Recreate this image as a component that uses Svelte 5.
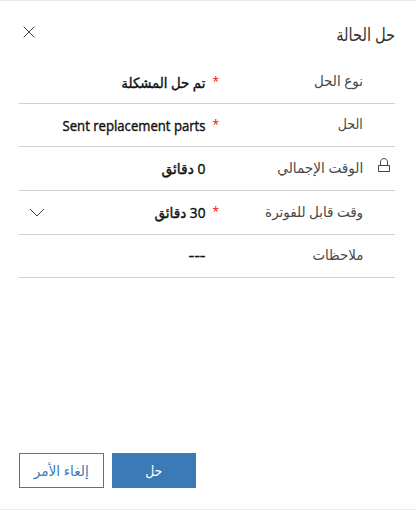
<script>
  const rows = [
    { label: 'نوع الحل', lw: 49, value: 'تم حل المشكلة', vw: 84, required: true, h: 43 },
    { label: 'الحل', lw: 25, value: 'Sent replacement parts', vw: 143, required: true, h: 43, latin: true },
    { label: 'الوقت الإجمالي', lw: 86, value: '0 دقائق', vw: 44, locked: true, h: 44 },
    { label: 'وقت قابل للفوترة', lw: 98, value: '30 دقائق', vw: 51, required: true, select: true, h: 44 },
    { label: 'ملاحظات', lw: 51, value: '---', vw: 17, h: 43, latin: true, empty: true }
  ];

  // Condenses a line of text to the width given for it.
  function fit(node, width) {
    node.style.transform = `scaleX(${width / node.getBoundingClientRect().width})`;
  }
</script>

<main class="dialog" dir="rtl">
  <header>
    <h1><span class="fit" use:fit={59}>حل الحالة</span></h1>
    <button class="close" aria-label="إغلاق">
      <svg width="12" height="12" viewBox="0 0 12 12"><path d="M.7.7 11.3 11.3M11.3.7.7 11.3" /></svg>
    </button>
  </header>

  <section>
    {#each rows as row}
      <div class="row" style:height="{row.h}px">
        <div class="lock">
          {#if row.locked}
            <svg width="12" height="15" viewBox="0 0 12 15"><path d="M.5 7.5h11v6H.5zM2.5 7.500V4C2.500 2 4 .6 6 .6S9.500 2 9.500 4v3.500" /></svg>
          {/if}
        </div>
        <div class="label"><span class="fit" use:fit={row.lw}>{row.label}</span></div>
        <div class="star">{row.required ? '*' : ''}</div>
        <div class="value" class:latin={row.latin} class:empty={row.empty}><span class="fit" use:fit={row.vw}>{row.value}</span></div>
        {#if row.select}
          <svg class="chevron" width="16" height="9" viewBox="0 0 16 9"><path d="M1 1l7 7 7-7" /></svg>
        {/if}
      </div>
    {/each}
  </section>

  <footer>
    <button class="primary"><span class="fit mid" use:fit={17}>حل</span></button>
    <button class="secondary"><span class="fit mid" use:fit={55}>إلغاء الأمر</span></button>
  </footer>
</main>

<style>
  .dialog {
    box-sizing: border-box;
    width: 416px;
    height: 510px;
    padding: 0 21px 0 19px;
    display: flex;
    flex-direction: column;
    background: #fff;
    border-top: 1px solid #ebebeb;
    border-bottom: 1px solid #ebebeb;
    font-family: 'Open Sans', 'DejaVu Sans', sans-serif;
    color: #484848;
  }
  header {
    height: 60px;
    display: flex;
    justify-content: space-between;
  }
  h1 {
    margin: 0;
    padding-top: 22px;
    font-size: 18px;
    line-height: 22px;
    font-weight: 400;
    color: #333;
  }
  .fit {
    display: inline-block;
    white-space: nowrap;
    transform-origin: right center;
  }
  .mid {
    transform-origin: center;
  }
  button {
    font: inherit;
    padding: 0;
    border: 0;
    background: none;
  }
  .close {
    width: 12px;
    height: 12px;
    margin: 25px 0 0 4px;
    line-height: 0;
  }
  svg {
    display: block;
    fill: none;
    stroke: #444;
    stroke-width: 1;
  }
  .row {
    box-sizing: border-box;
    display: flex;
    align-items: center;
    border-bottom: 1px solid #d2d2d2;
  }
  .lock {
    width: 32px;
    padding: 0 5px 6px 0;
    box-sizing: border-box;
  }
  .label {
    width: 144px;
    padding-bottom: 2px;
    font-size: 14px;
    line-height: 20px;
  }
  .star {
    width: 14px;
    padding-bottom: 1px;
    font-size: 12px;
    line-height: 20px;
    color: #f00;
  }
  .value {
    flex: 1;
    padding-top: 1px;
    font-size: 14px;
    line-height: 20px;
    color: #111;
    -webkit-text-stroke: 0.4px #111;
  }
  .latin {
    margin-right: -1px;
  }
  .empty {
    padding: 0 0 1px;
  }
  .chevron {
    margin-left: 10px;
  }
  footer {
    margin-top: auto;
    margin-bottom: 21px;
    display: flex;
    justify-content: flex-end;
    gap: 8px;
  }
  footer button {
    box-sizing: border-box;
    height: 35px;
    font-size: 14px;
    line-height: 20px;
    border: 1px solid #3b79b7;
  }
  .primary {
    width: 84px;
    background: #3b79b7;
    color: #fff;
  }
  .secondary {
    width: 85px;
    background: #fff;
    color: #3b79b7;
  }
</style>
